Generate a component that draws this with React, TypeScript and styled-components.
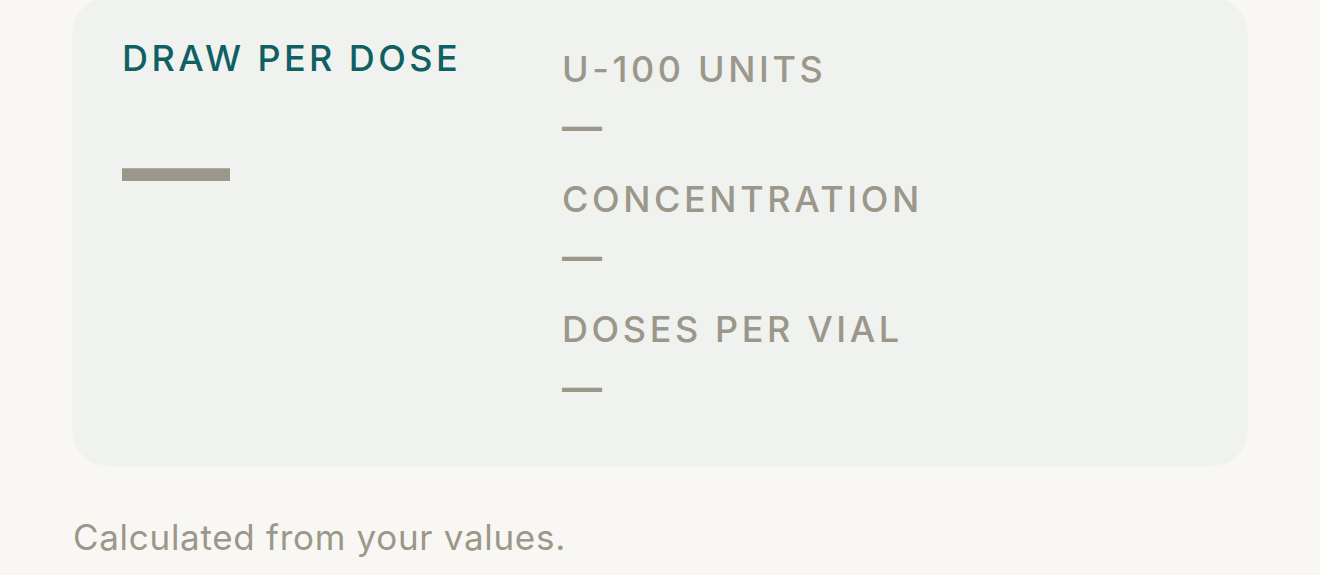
import React from "react";
import styled, { createGlobalStyle } from "styled-components";

const Global = createGlobalStyle`
  html, body {
    margin: 0;
    padding: 0;
    background: #f8f7f3;
  }
  body {
    font-family: Inter, "Noto Sans", "Liberation Sans", sans-serif;
    -webkit-font-smoothing: antialiased;
  }
`;

const Page = styled.main`
  padding: 0 72px;
`;

const Card = styled.section`
  margin-top: -2px;
  background: #f0f2ef;
  border-radius: 36px;
  padding: 39px 50px 54px;
  display: grid;
  grid-template-columns: 440px 1fr;
`;

const Primary = styled.div`
  display: flex;
  flex-direction: column;
  gap: 23px;
`;

const Title = styled.h2`
  margin: 0;
  font-size: 36px;
  line-height: 1.2;
  font-weight: 500;
  letter-spacing: 0.095em;
  color: #0f5f63;
`;

const BigValue = styled.div`
  font-size: 108px;
  line-height: 1.2;
  font-weight: 700;
  color: #9b978a;
`;

const Stats = styled.dl`
  margin: 0;
  padding-top: 11px;
  display: flex;
  flex-direction: column;
  gap: 27px;
`;

const Stat = styled.div`
  display: flex;
  flex-direction: column;
  gap: 12px;
`;

const Label = styled.dt`
  font-size: 36px;
  line-height: 1.2;
  font-weight: 500;
  letter-spacing: 0.1em;
  color: #9b978a;
`;

const Value = styled.dd`
  margin: 0;
  font-size: 40px;
  line-height: 1.2;
  font-weight: 600;
  color: #9b978a;
`;

const Note = styled.p`
  margin: 50px 0 0 1px;
  font-size: 35px;
  line-height: 1.2;
  font-weight: 400;
  letter-spacing: 0.02em;
  color: #9b978a;
`;

const stats = [
  { label: "U-100 UNITS", value: "—" },
  { label: "CONCENTRATION", value: "—" },
  { label: "DOSES PER VIAL", value: "—" },
];

export default function App() {
  return (
    <Page>
      <Global />
      <Card>
        <Primary>
          <Title>DRAW PER DOSE</Title>
          <BigValue>—</BigValue>
        </Primary>
        <Stats>
          {stats.map((s) => (
            <Stat key={s.label}>
              <Label>{s.label}</Label>
              <Value>{s.value}</Value>
            </Stat>
          ))}
        </Stats>
      </Card>
      <Note>Calculated from your values.</Note>
    </Page>
  );
}
